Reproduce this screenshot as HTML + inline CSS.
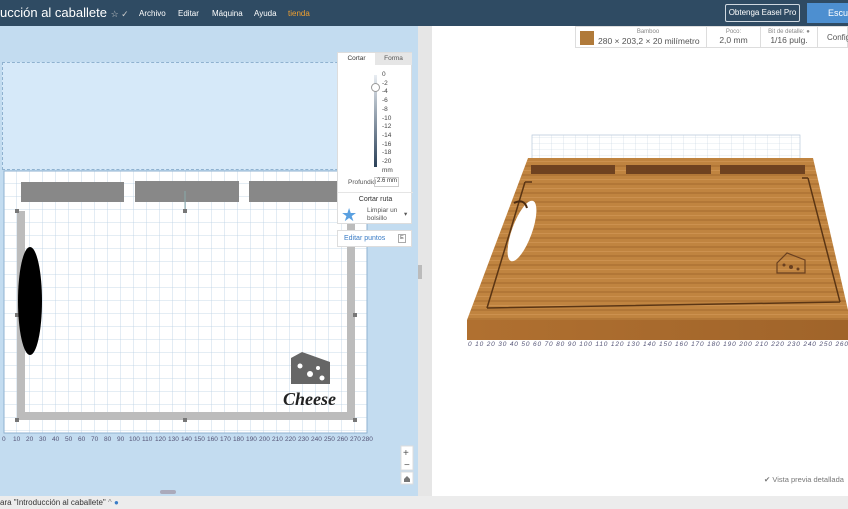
<!DOCTYPE html>
<html><head><meta charset="utf-8"><style>
*{margin:0;padding:0;box-sizing:border-box}
body{width:848px;height:509px;overflow:hidden;font-family:"Liberation Sans",sans-serif;background:#fff;position:relative}
.hdr{position:absolute;left:0;top:0;width:848px;height:26px;background:#2f4b63;color:#fff}
.hdr .t{position:absolute;left:0;top:5px;font-size:13px}
.hdr .m{position:absolute;top:9px;font-size:8px}
.abs{position:absolute}
</style></head><body>
<div class="hdr">
<div class="t">ucción al caballete <span style="font-size:9px;color:#ccc">☆ ✓</span></div>
<div class="m" style="left:139px">Archivo</div>
<div class="m" style="left:178px">Editar</div>
<div class="m" style="left:212px">Máquina</div>
<div class="m" style="left:254px">Ayuda</div>
<div class="m" style="left:288px;color:#f0a030">tienda</div>
<div class="abs" style="left:725px;top:4px;width:75px;height:18px;border:1px solid #cfd8e0;border-radius:2px;font-size:8px;text-align:center;line-height:16px">Obtenga Easel Pro</div>
<div class="abs" style="left:807px;top:3px;width:50px;height:20px;background:#4d8fd0;font-size:9px;line-height:20px;padding-left:21px">Escul</div>
</div>
<div class="abs" style="left:0;top:26px;width:418px;height:470px;background:#c3dcf0"></div>
<div class="abs" style="left:2px;top:62px;width:366px;height:108px;background:#d6e9f9;border:1px dashed #8fb2d0"></div>
<div class="abs" style="left:418px;top:26px;width:14px;height:470px;background:#e6e6e6"></div>
<div class="abs" style="left:418px;top:265px;width:4px;height:14px;background:#bbb"></div>
<svg class="abs" style="left:0;top:0" width="420" height="500">
<defs><pattern id="g" x="4" y="171" width="13" height="13" patternUnits="userSpaceOnUse"><path d="M13 0V13H0" fill="none" stroke="#b9cfe4" stroke-width="0.8"/></pattern></defs>
<rect x="4" y="171" width="363" height="262" fill="#fff"/>
<rect x="4" y="171" width="363" height="262" fill="url(#g)"/>
<rect x="4" y="171" width="363" height="262" fill="none" stroke="#8fb2d0"/>
<rect x="21" y="182" width="103" height="20" fill="#888"/>
<rect x="135" y="181" width="104" height="21" fill="#888"/>
<rect x="249" y="181" width="90" height="21" fill="#888"/>
<line x1="185" y1="191" x2="185" y2="211" stroke="#8aa"/>
<path d="M17 211H25V412H347V211H355V420H17Z" fill="#bcbcbc"/>
<g fill="#777"><rect x="15" y="209" width="4" height="4"/><rect x="183" y="209" width="4" height="4"/><rect x="15" y="418" width="4" height="4"/><rect x="183" y="418" width="4" height="4"/><rect x="353" y="418" width="4" height="4"/><rect x="353" y="313" width="4" height="4"/><rect x="15" y="313" width="4" height="4"/></g>
<ellipse cx="30" cy="301" rx="12" ry="54" fill="#000"/>
<path d="M291 369V358L302 352L330 362V384H291Z" fill="#666"/>
<circle cx="300" cy="366" r="2.5" fill="#fff"/><circle cx="310" cy="374" r="3" fill="#fff"/><circle cx="322" cy="378" r="2.5" fill="#fff"/><circle cx="318" cy="368" r="2" fill="#fff"/>
<text x="283" y="405" font-family="Liberation Serif" font-style="italic" font-weight="bold" font-size="18" fill="#222">Cheese</text>
<g font-size="6.5" fill="#557">
<text x="2" y="441">0</text><text x="13" y="441">10</text><text x="26" y="441">20</text><text x="39" y="441">30</text><text x="52" y="441">40</text><text x="65" y="441">50</text><text x="78" y="441">60</text><text x="91" y="441">70</text><text x="104" y="441">80</text><text x="117" y="441">90</text><text x="129" y="441">100</text><text x="142" y="441">110</text><text x="155" y="441">120</text><text x="168" y="441">130</text><text x="181" y="441">140</text><text x="194" y="441">150</text><text x="207" y="441">160</text><text x="220" y="441">170</text><text x="233" y="441">180</text><text x="246" y="441">190</text><text x="259" y="441">200</text><text x="272" y="441">210</text><text x="285" y="441">220</text><text x="298" y="441">230</text><text x="311" y="441">240</text><text x="324" y="441">250</text><text x="337" y="441">260</text><text x="350" y="441">270</text><text x="362" y="441">280</text>
</g>
<rect x="401" y="446" width="12" height="24" fill="#fff" stroke="#ddd"/>
<text x="403" y="456" font-size="10" fill="#555">+</text><text x="404" y="468" font-size="10" fill="#555">−</text>
<rect x="401" y="472" width="12" height="12" fill="#fff" stroke="#ddd"/>
<path d="M404 479L407 476L410 479V482H404Z" fill="#777"/>
<rect x="160" y="490" width="16" height="4" rx="2" fill="#aab"/>
</svg>
<div class="abs" style="left:0;top:496px;width:848px;height:13px;background:#ececec;font-size:8px;color:#333;padding:2px 0 0 0">ara "Introducción al caballete" <span style="color:#888">^</span> <span style="color:#3a7cc6">●</span></div>
<div class="abs" style="left:337px;top:52px;width:75px;height:172px;background:#fff;border:1px solid #ddd;font-size:6.5px;color:#555">
<div class="abs" style="left:0;top:0;width:37px;height:12px;text-align:center;line-height:12px;color:#333">Cortar</div>
<div class="abs" style="left:37px;top:0;width:37px;height:12px;background:#e6e6e6;text-align:center;line-height:12px">Forma</div>
<div class="abs" style="left:36px;top:22px;width:3px;height:92px;background:linear-gradient(#e8edf2,#2a4058)"></div>
<div class="abs" style="left:33px;top:30px;width:9px;height:9px;border-radius:50%;background:#fff;border:1px solid #999"></div>
<div class="abs" style="left:44px;top:18px;line-height:8.7px;color:#444">0<br>-2<br>-4<br>-6<br>-8<br>-10<br>-12<br>-14<br>-16<br>-18<br>-20<br>mm</div>
<div class="abs" style="left:10px;top:126px">Profundid</div>
<div class="abs" style="left:36px;top:124px;width:25px;height:10px;border:1px solid #ccc;color:#333;padding-left:2px;white-space:nowrap;font-size:6px">2.6 mm</div>
<div class="abs" style="left:0;top:139px;width:75px;border-top:1px solid #e5e5e5;text-align:center;padding-top:3px;font-size:7px;color:#333">Cortar ruta</div>
<div class="abs" style="left:3px;top:152px;font-size:18px;color:#5aa0e0">★</div>
<div class="abs" style="left:29px;top:154px;line-height:8px">Limpiar un<br>bolsillo</div>
<div class="abs" style="left:66px;top:157px">▾</div>
</div>
<div class="abs" style="left:337px;top:230px;width:75px;height:17px;background:#fff;border:1px solid #ddd;font-size:7px;color:#3a7cc6;padding:4px 0 0 6px">Editar puntos<span class="abs" style="left:60px;top:3px;width:8px;height:9px;border:1px solid #aaa;color:#444;font-size:5.5px;text-align:center">E</span></div>
<div class="abs" style="left:575px;top:26px;width:273px;height:22px;background:#fff;border:1px solid #ddd;font-size:6px;color:#888">
<div class="abs" style="left:4px;top:4px;width:14px;height:14px;background:#b07a3a"></div>
<div class="abs" style="left:22px;top:2px;width:100px;text-align:center">Bamboo</div>
<div class="abs" style="left:22px;top:9px;font-size:8.5px;color:#555">280 × 203,2 × 20 milímetro</div>
<div class="abs" style="left:130px;top:0;height:20px;border-left:1px solid #ddd;width:54px;text-align:center;padding-top:2px">Poco:<br><span style="font-size:8.5px;color:#555">2,0 mm</span></div>
<div class="abs" style="left:184px;top:0;height:20px;border-left:1px solid #ddd;width:57px;text-align:center;padding-top:2px">Bit de detalle: ●<br><span style="font-size:8.5px;color:#555">1/16 pulg.</span></div>
<div class="abs" style="left:241px;top:0;height:20px;border-left:1px solid #ddd;padding:6px 0 0 9px;font-size:8px;color:#555">Config</div>
</div>
<svg class="abs" style="left:432px;top:48px" width="416" height="448">
<defs><pattern id="g2" x="0" y="0" width="12" height="6" patternUnits="userSpaceOnUse"><path d="M12 0V6H0" fill="none" stroke="#c5d2e0" stroke-width="0.6"/></pattern>
<pattern id="gr" x="0" y="0" width="50" height="9" patternUnits="userSpaceOnUse"><rect width="50" height="9" fill="#c08440"/><rect y="0" width="50" height="2" fill="#a96e30" opacity="0.6"/><rect y="5" width="50" height="1" fill="#d49a58" opacity="0.6"/></pattern>
<linearGradient id="fr" x1="0" y1="0" x2="1" y2="0"><stop offset="0" stop-color="#b07030"/><stop offset="1" stop-color="#a0642a"/></linearGradient></defs>
<path d="M100 87L368 87V112H100Z" fill="url(#g2)" stroke="#b8c8da" stroke-width="0.7"/>
<path d="M96 110L381 110L416 262V272H35Z" fill="url(#gr)"/>
<path d="M35 272H416V292H35Z" fill="url(#fr)"/>
<path d="M93 134L55 260M55 260L408 254M376 130L408 254M93 134H100M370 130H376" stroke="#5a3514" stroke-width="1.5" fill="none"/>
<rect x="99" y="117" width="84" height="9" fill="#6f4220"/><rect x="194" y="117" width="85" height="9" fill="#6f4220"/><rect x="288" y="117" width="85" height="9" fill="#6f4220"/>
<ellipse cx="90" cy="183" rx="10" ry="32" fill="#fff" transform="rotate(20 90 183)"/>
<path d="M82 155Q92 150 95 160" stroke="#4a2a10" stroke-width="2" fill="none"/>
<path d="M345 215V225H373V212L355 205Z" fill="none" stroke="#6a4020" stroke-width="1.2"/>
<circle cx="352" cy="217" r="1.5" fill="#6a4020"/><circle cx="359" cy="219" r="2" fill="#6a4020"/><circle cx="366" cy="221" r="1.5" fill="#6a4020"/>
<g font-size="6.5" fill="#557" font-style="italic"><text x="36" y="298" textLength="380">0 10 20 30 40 50 60 70 80 90 100 110 120 130 140 150 160 170 180 190 200 210 220 230 240 250 260</text></g>
<text x="332" y="434" font-size="7.5" fill="#777">✔ Vista previa detallada</text>
</svg>
</body></html>
